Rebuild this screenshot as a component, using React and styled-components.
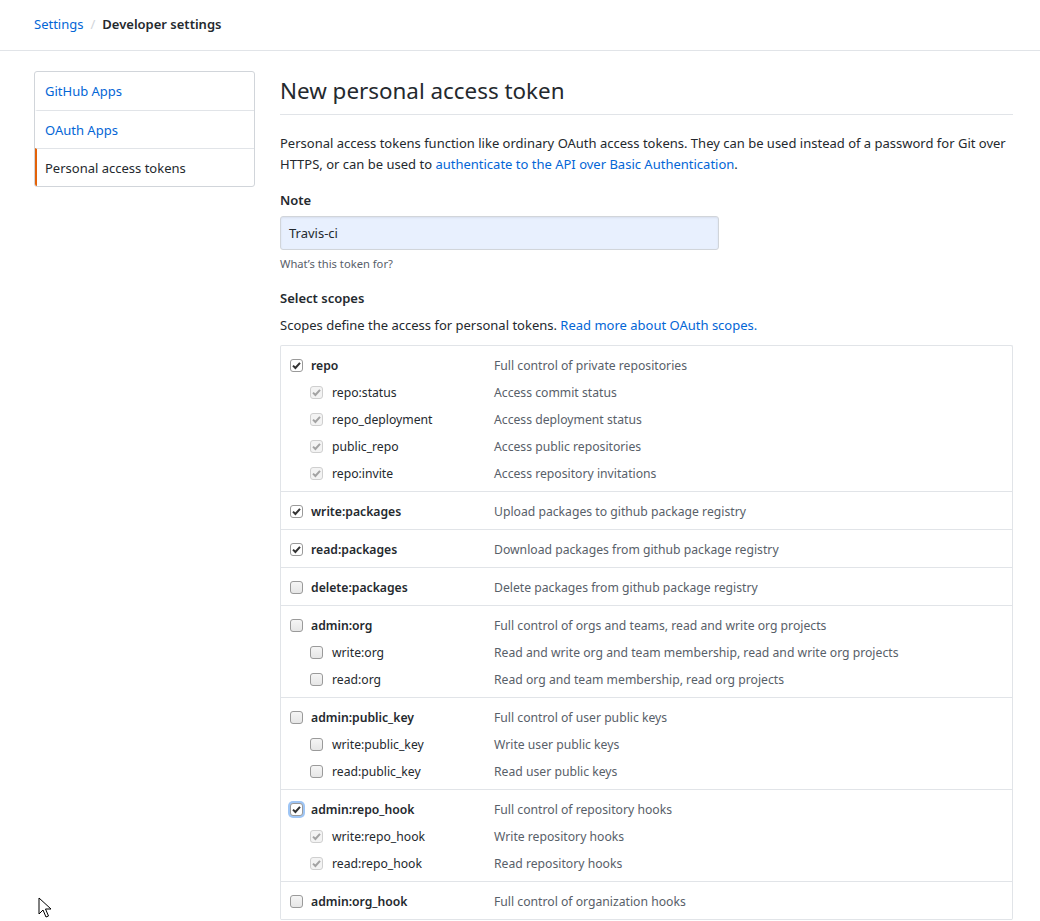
import React from 'react';
import styled, { createGlobalStyle } from 'styled-components';

const GlobalStyle = createGlobalStyle`
  html, body {
    margin: 0;
    padding: 0;
    background: #fff;
  }
  body {
    font-family: "Noto Sans", "Liberation Sans", sans-serif;
    font-size: 13px;
    color: #24292e;
  }
  * { box-sizing: border-box; }
`;

const TopBar = styled.div`
  height: 51px;
  border-bottom: 1px solid #e1e4e8;
  display: flex;
  align-items: center;
  padding: 0 34px 3px;
  font-size: 13px;
`;

const Crumb = styled.a`
  color: #0366d6;
  text-decoration: none;
`;

const CrumbSep = styled.span`
  color: #d1d5da;
  margin: 0 7px;
`;

const CrumbCurrent = styled.span`
  font-weight: 600;
  color: #24292e;
`;

const Layout = styled.div`
  display: grid;
  grid-template-columns: 221px 1fr;
  gap: 25px;
  padding: 20px 27px 0 34px;
`;

const Menu = styled.nav`
  border: 1px solid #d1d5da;
  border-radius: 3px;
  align-self: start;
  overflow: hidden;
`;

const MenuItem = styled.a`
  display: block;
  height: 38px;
  line-height: 38px;
  padding: 0 8px;
  font-size: 13px;
  text-decoration: none;
  color: ${p => (p.$active ? '#24292e' : '#0366d6')};
  border-left: 2px solid ${p => (p.$active ? '#e36209' : 'transparent')};
  border-top: ${p => (p.$first ? 'none' : '1px solid #e1e4e8')};
`;

const Main = styled.div`
  min-width: 0;
`;

const Title = styled.h2`
  margin: 0;
  font-size: 22.4px;
  font-weight: 400;
  line-height: 38px;
  padding-bottom: 4px;
  border-bottom: 1px solid #e1e4e8;
  margin-top: 1px;
`;

const Intro = styled.p`
  margin: 18px 0 0;
  line-height: 21px;
  font-size: 13px;
`;

const Link = styled.a`
  color: #0366d6;
  text-decoration: none;
`;

const Label = styled.div`
  font-weight: 600;
  font-size: 13px;
  margin-top: ${p => p.$top || 0}px;
  line-height: 20px;
`;

const Input = styled.div`
  width: 439px;
  height: 34px;
  margin-top: 6px;
  background: #e8f0fe;
  border: 1px solid #d1d5da;
  border-radius: 3px;
  padding: 0 8px;
  display: flex;
  align-items: center;
  font-size: 13px;
  box-shadow: inset 0 1px 2px rgba(27, 31, 35, 0.075);
`;

const Hint = styled.div`
  font-size: 11.2px;
  color: #586069;
  margin-top: 6px;
`;

const Desc = styled.p`
  margin: 7px 0 0;
  font-size: 13px;
  line-height: 21px;
`;

const ScopeBox = styled.div`
  margin-top: 9px;
  border: 1px solid #e1e4e8;
  border-radius: 2px;
  border-bottom: none;
`;

const Group = styled.div`
  padding: 6px 0 4px;
  border-bottom: 1px solid #e1e4e8;
`;

const Row = styled.div`
  display: grid;
  grid-template-columns: ${p => (p.$sub ? '29px 22px 162px' : '9px 21px 183px')} 1fr;
  align-items: center;
  height: 27px;
  font-size: 12.2px;
`;

const ScopeName = styled.span`
  grid-column: 3;
  font-weight: ${p => (p.$sub ? 400 : 600)};
  color: #24292e;
`;

const ScopeDesc = styled.span`
  grid-column: 4;
  color: #586069;
`;

const BoxWrap = styled.span`
  grid-column: 2;
  width: 13px;
  height: 13px;
  border-radius: 3px;
  border: 1px solid ${p => (p.$disabled ? '#cfcfcf' : '#9a9a9a')};
  background: ${p => (p.$disabled
    ? '#f3f3f3'
    : p.$checked ? '#fff' : 'linear-gradient(#f5f5f5, #e6e6e6)')};
  display: flex;
  align-items: center;
  justify-content: center;
  box-shadow: ${p => (p.$focus ? '0 0 0 2px #9ec5f5' : 'none')};
`;

const Cursor = styled.svg`
  position: fixed;
  left: 38px;
  top: 897px;
`;

const Check = ({ checked, disabled, focus }) => (
  <BoxWrap $disabled={disabled} $checked={checked} $focus={focus}>
    {checked && (
      <svg width="9" height="9" viewBox="0 0 9 9">
        <path
          d="M1 4.6 L3.4 7 L8 1.8"
          fill="none"
          stroke={disabled ? '#a3a3a3' : '#333'}
          strokeWidth="2"
        />
      </svg>
    )}
  </BoxWrap>
);

const scopes = [
  {
    name: 'repo', desc: 'Full control of private repositories', checked: true,
    subs: [
      ['repo:status', 'Access commit status'],
      ['repo_deployment', 'Access deployment status'],
      ['public_repo', 'Access public repositories'],
      ['repo:invite', 'Access repository invitations'],
    ],
  },
  { name: 'write:packages', desc: 'Upload packages to github package registry', checked: true },
  { name: 'read:packages', desc: 'Download packages from github package registry', checked: true },
  { name: 'delete:packages', desc: 'Delete packages from github package registry' },
  {
    name: 'admin:org', desc: 'Full control of orgs and teams, read and write org projects',
    subs: [
      ['write:org', 'Read and write org and team membership, read and write org projects'],
      ['read:org', 'Read org and team membership, read org projects'],
    ],
  },
  {
    name: 'admin:public_key', desc: 'Full control of user public keys',
    subs: [
      ['write:public_key', 'Write user public keys'],
      ['read:public_key', 'Read user public keys'],
    ],
  },
  {
    name: 'admin:repo_hook', desc: 'Full control of repository hooks', checked: true, focus: true,
    subs: [
      ['write:repo_hook', 'Write repository hooks'],
      ['read:repo_hook', 'Read repository hooks'],
    ],
  },
  { name: 'admin:org_hook', desc: 'Full control of organization hooks' },
];

export default function App() {
  return (
    <>
      <GlobalStyle />
      <TopBar>
        <Crumb href="#">Settings</Crumb>
        <CrumbSep>/</CrumbSep>
        <CrumbCurrent>Developer settings</CrumbCurrent>
      </TopBar>
      <Layout>
        <Menu>
          <MenuItem href="#" $first>GitHub Apps</MenuItem>
          <MenuItem href="#">OAuth Apps</MenuItem>
          <MenuItem href="#" $active>Personal access tokens</MenuItem>
        </Menu>
        <Main>
          <Title>New personal access token</Title>
          <Intro>
            Personal access tokens function like ordinary OAuth access tokens. They can be used instead of a password for Git over
            <br />
            HTTPS, or can be used to <Link href="#">authenticate to the API over Basic Authentication</Link>.
          </Intro>
          <Label $top={15}>Note</Label>
          <Input>Travis-ci</Input>
          <Hint>What’s this token for?</Hint>
          <Label $top={17}>Select scopes</Label>
          <Desc>
            Scopes define the access for personal tokens. <Link href="#">Read more about OAuth scopes.</Link>
          </Desc>
          <ScopeBox>
            {scopes.map(s => (
              <Group key={s.name}>
                <Row>
                  <Check checked={s.checked} focus={s.focus} />
                  <ScopeName>{s.name}</ScopeName>
                  <ScopeDesc>{s.desc}</ScopeDesc>
                </Row>
                {(s.subs || []).map(([n, d]) => (
                  <Row $sub key={n}>
                    <Check checked={s.checked} disabled={s.checked} />
                    <ScopeName $sub>{n}</ScopeName>
                    <ScopeDesc>{d}</ScopeDesc>
                  </Row>
                ))}
              </Group>
            ))}
          </ScopeBox>
        </Main>
      </Layout>
      <Cursor width="14" height="22" viewBox="0 0 14 22">
        <path d="M1 1 L1 17 L5 13 L8 20 L10.5 19 L7.5 12 L13 12 Z" fill="#fff" stroke="#000" strokeWidth="1" strokeLinejoin="round" />
      </Cursor>
    </>
  );
}
